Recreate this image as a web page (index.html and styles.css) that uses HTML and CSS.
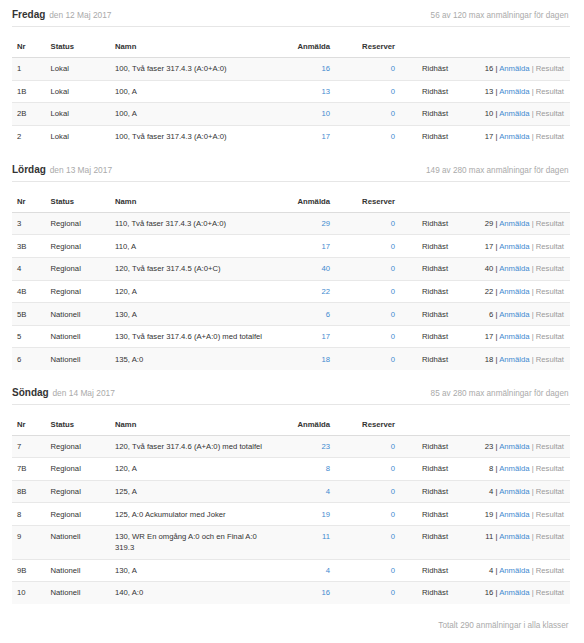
FILE: index.html
```html
<!DOCTYPE html>
<html lang="sv">
<head>
<meta charset="utf-8">
<title>Klasser</title>
<link rel="stylesheet" href="styles.css">
</head>
<body>
<div class="page">

  <section class="day">
    <div class="day-head">
      <h2 class="day-title">Fredag <small class="day-date">den 12 Maj 2017</small></h2>
      <span class="day-quota">56 av 120 max anmälningar för dagen</span>
    </div>
    <table class="classes">
      <colgroup>
        <col class="c-nr"><col class="c-status"><col class="c-name"><col class="c-anm"><col class="c-res"><col class="c-arena"><col class="c-links">
      </colgroup>
      <thead>
        <tr><th>Nr</th><th>Status</th><th>Namn</th><th class="num">Anmälda</th><th class="num">Reserver</th><th class="arena"></th><th></th></tr>
      </thead>
      <tbody>
        <tr><td>1</td><td>Lokal</td><td>100, Två faser 317.4.3 (A:0+A:0)</td><td class="num"><a href="#">16</a></td><td class="num"><a href="#">0</a></td><td class="arena">Ridhäst</td><td class="links">16 | <a href="#">Anmälda</a> <span class="muted">| Resultat</span></td></tr>
        <tr><td>1B</td><td>Lokal</td><td>100, A</td><td class="num"><a href="#">13</a></td><td class="num"><a href="#">0</a></td><td class="arena">Ridhäst</td><td class="links">13 | <a href="#">Anmälda</a> <span class="muted">| Resultat</span></td></tr>
        <tr><td>2B</td><td>Lokal</td><td>100, A</td><td class="num"><a href="#">10</a></td><td class="num"><a href="#">0</a></td><td class="arena">Ridhäst</td><td class="links">10 | <a href="#">Anmälda</a> <span class="muted">| Resultat</span></td></tr>
        <tr><td>2</td><td>Lokal</td><td>100, Två faser 317.4.3 (A:0+A:0)</td><td class="num"><a href="#">17</a></td><td class="num"><a href="#">0</a></td><td class="arena">Ridhäst</td><td class="links">17 | <a href="#">Anmälda</a> <span class="muted">| Resultat</span></td></tr>
      </tbody>
    </table>
  </section>

  <section class="day">
    <div class="day-head">
      <h2 class="day-title">Lördag <small class="day-date">den 13 Maj 2017</small></h2>
      <span class="day-quota">149 av 280 max anmälningar för dagen</span>
    </div>
    <table class="classes">
      <colgroup>
        <col class="c-nr"><col class="c-status"><col class="c-name"><col class="c-anm"><col class="c-res"><col class="c-arena"><col class="c-links">
      </colgroup>
      <thead>
        <tr><th>Nr</th><th>Status</th><th>Namn</th><th class="num">Anmälda</th><th class="num">Reserver</th><th class="arena"></th><th></th></tr>
      </thead>
      <tbody>
        <tr><td>3</td><td>Regional</td><td>110, Två faser 317.4.3 (A:0+A:0)</td><td class="num"><a href="#">29</a></td><td class="num"><a href="#">0</a></td><td class="arena">Ridhäst</td><td class="links">29 | <a href="#">Anmälda</a> <span class="muted">| Resultat</span></td></tr>
        <tr><td>3B</td><td>Regional</td><td>110, A</td><td class="num"><a href="#">17</a></td><td class="num"><a href="#">0</a></td><td class="arena">Ridhäst</td><td class="links">17 | <a href="#">Anmälda</a> <span class="muted">| Resultat</span></td></tr>
        <tr><td>4</td><td>Regional</td><td>120, Två faser 317.4.5 (A:0+C)</td><td class="num"><a href="#">40</a></td><td class="num"><a href="#">0</a></td><td class="arena">Ridhäst</td><td class="links">40 | <a href="#">Anmälda</a> <span class="muted">| Resultat</span></td></tr>
        <tr><td>4B</td><td>Regional</td><td>120, A</td><td class="num"><a href="#">22</a></td><td class="num"><a href="#">0</a></td><td class="arena">Ridhäst</td><td class="links">22 | <a href="#">Anmälda</a> <span class="muted">| Resultat</span></td></tr>
        <tr><td>5B</td><td>Nationell</td><td>130, A</td><td class="num"><a href="#">6</a></td><td class="num"><a href="#">0</a></td><td class="arena">Ridhäst</td><td class="links">6 | <a href="#">Anmälda</a> <span class="muted">| Resultat</span></td></tr>
        <tr><td>5</td><td>Nationell</td><td>130, Två faser 317.4.6 (A+A:0) med totalfel</td><td class="num"><a href="#">17</a></td><td class="num"><a href="#">0</a></td><td class="arena">Ridhäst</td><td class="links">17 | <a href="#">Anmälda</a> <span class="muted">| Resultat</span></td></tr>
        <tr><td>6</td><td>Nationell</td><td>135, A:0</td><td class="num"><a href="#">18</a></td><td class="num"><a href="#">0</a></td><td class="arena">Ridhäst</td><td class="links">18 | <a href="#">Anmälda</a> <span class="muted">| Resultat</span></td></tr>
      </tbody>
    </table>
  </section>

  <section class="day">
    <div class="day-head">
      <h2 class="day-title">Söndag <small class="day-date">den 14 Maj 2017</small></h2>
      <span class="day-quota">85 av 280 max anmälningar för dagen</span>
    </div>
    <table class="classes">
      <colgroup>
        <col class="c-nr"><col class="c-status"><col class="c-name"><col class="c-anm"><col class="c-res"><col class="c-arena"><col class="c-links">
      </colgroup>
      <thead>
        <tr><th>Nr</th><th>Status</th><th>Namn</th><th class="num">Anmälda</th><th class="num">Reserver</th><th class="arena"></th><th></th></tr>
      </thead>
      <tbody>
        <tr><td>7</td><td>Regional</td><td>120, Två faser 317.4.6 (A+A:0) med totalfel</td><td class="num"><a href="#">23</a></td><td class="num"><a href="#">0</a></td><td class="arena">Ridhäst</td><td class="links">23 | <a href="#">Anmälda</a> <span class="muted">| Resultat</span></td></tr>
        <tr><td>7B</td><td>Regional</td><td>120, A</td><td class="num"><a href="#">8</a></td><td class="num"><a href="#">0</a></td><td class="arena">Ridhäst</td><td class="links">8 | <a href="#">Anmälda</a> <span class="muted">| Resultat</span></td></tr>
        <tr><td>8B</td><td>Regional</td><td>125, A</td><td class="num"><a href="#">4</a></td><td class="num"><a href="#">0</a></td><td class="arena">Ridhäst</td><td class="links">4 | <a href="#">Anmälda</a> <span class="muted">| Resultat</span></td></tr>
        <tr><td>8</td><td>Regional</td><td>125, A:0 Ackumulator med Joker</td><td class="num"><a href="#">19</a></td><td class="num"><a href="#">0</a></td><td class="arena">Ridhäst</td><td class="links">19 | <a href="#">Anmälda</a> <span class="muted">| Resultat</span></td></tr>
        <tr><td>9</td><td>Nationell</td><td>130, WR En omgång A:0 och en Final A:0 319.3</td><td class="num"><a href="#">11</a></td><td class="num"><a href="#">0</a></td><td class="arena">Ridhäst</td><td class="links">11 | <a href="#">Anmälda</a> <span class="muted">| Resultat</span></td></tr>
        <tr><td>9B</td><td>Nationell</td><td>130, A</td><td class="num"><a href="#">4</a></td><td class="num"><a href="#">0</a></td><td class="arena">Ridhäst</td><td class="links">4 | <a href="#">Anmälda</a> <span class="muted">| Resultat</span></td></tr>
        <tr><td>10</td><td>Nationell</td><td>140, A:0</td><td class="num"><a href="#">16</a></td><td class="num"><a href="#">0</a></td><td class="arena">Ridhäst</td><td class="links">16 | <a href="#">Anmälda</a> <span class="muted">| Resultat</span></td></tr>
      </tbody>
    </table>
  </section>

  <p class="total">Totalt 290 anmälningar i alla klasser</p>
</div>
</body>
</html>
```
FILE: styles.css
```css
* { box-sizing: border-box; }

html, body {
  margin: 0;
  padding: 0;
  background: #fff;
}

body {
  font-family: "Liberation Sans", Arial, sans-serif;
  font-size: 7.7px;
  line-height: 11px;
  color: #333;
}

.page {
  padding: 0 14.5px 0 12px;
}

.day {
  margin-top: 16.5px;
}

.day:first-child {
  margin-top: 9px;
}

.day-head {
  display: flex;
  justify-content: space-between;
  align-items: baseline;
  padding-bottom: 5px;
  border-bottom: 1px solid #e6e6e6;
  margin-bottom: 9px;
}

.day-title {
  margin: 0;
  font-size: 10px;
  line-height: 11px;
  font-weight: bold;
  color: #333;
}

.day-date {
  font-size: 8.4px;
  font-weight: normal;
  color: #aaa;
  margin-left: 1px;
}

.day-quota {
  font-size: 8.2px;
  color: #aaa;
  padding-right: 1px;
}

.classes {
  width: 100%;
  border-collapse: collapse;
  table-layout: fixed;
}

.c-nr { width: 33.5px; }
.c-status { width: 64.5px; }
.c-name { width: 163px; }
.c-anm { width: 62px; }
.c-res { width: 65px; }
.c-arena { width: 70px; }

.classes th,
.classes td {
  padding: 5.3px 5px;
  text-align: left;
  vertical-align: top;
}

.classes th {
  padding-top: 5px;
  padding-bottom: 5px;
  font-weight: bold;
  border-bottom: 1px solid #ddd;
}

.classes td {
  border-top: 1px solid #e8e8e8;
}

.classes tbody tr:first-child td {
  border-top: 0;
}

.classes tbody tr:nth-child(odd) td {
  background: #f9f9f9;
}

.classes .num {
  text-align: right;
}

.classes .arena {
  padding-left: 22px;
}

.classes .links {
  text-align: right;
  white-space: nowrap;
  padding-right: 5.5px;
}

a {
  color: #3f8ad0;
  text-decoration: none;
}

.muted {
  color: #999;
}

.total {
  margin: 16px 0 0;
  text-align: right;
  font-size: 8.2px;
  color: #aaa;
  padding-right: 1px;
}
```
